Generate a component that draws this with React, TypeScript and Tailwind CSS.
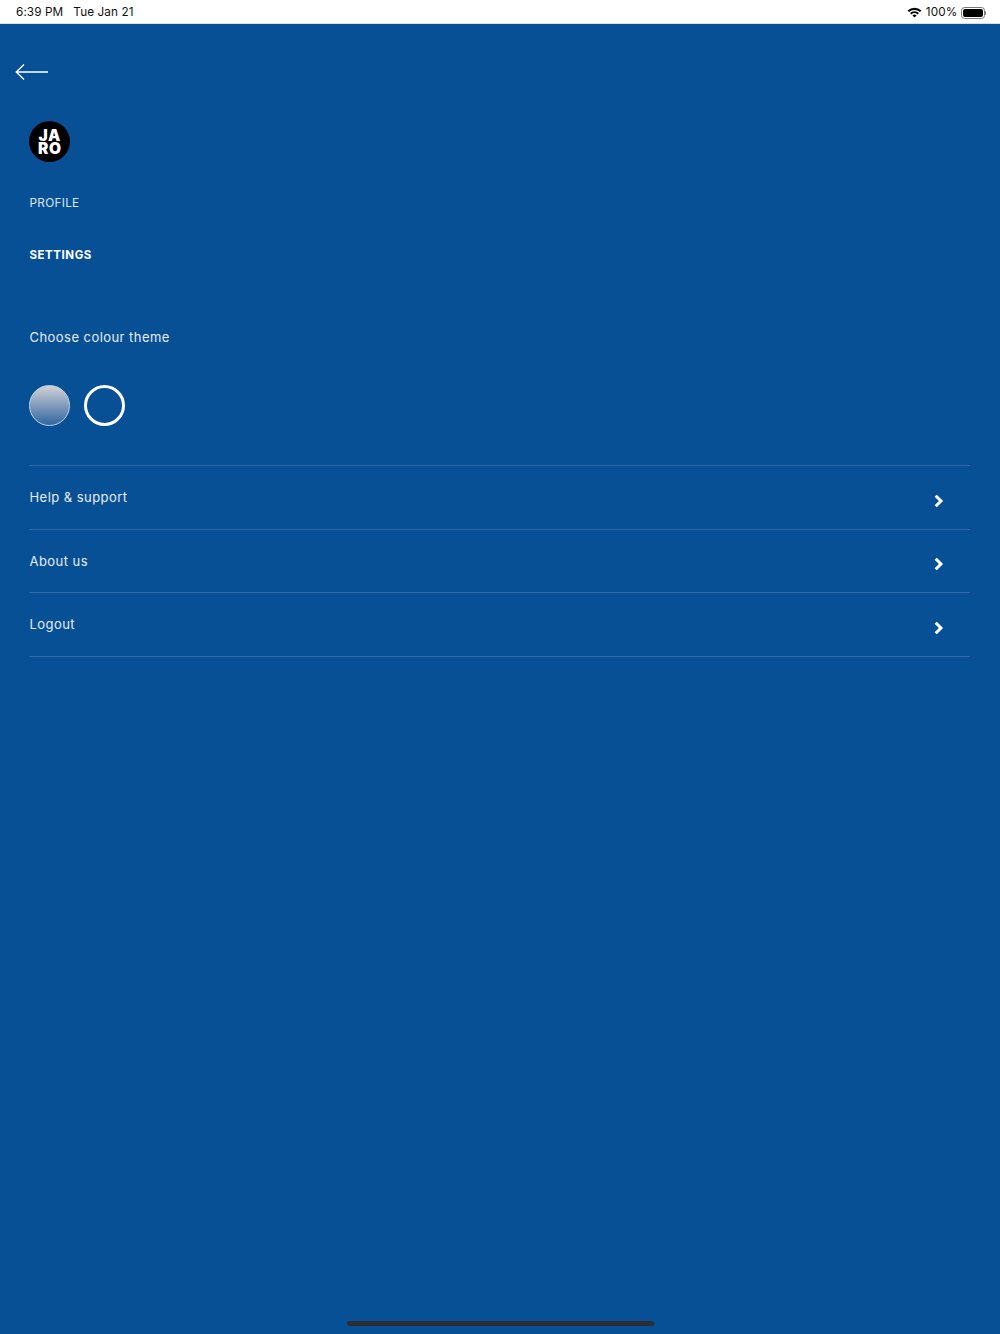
import React from "react";

const Chevron = () => (
  <svg width="10" height="14" viewBox="0 0 10 14" className="block">
    <path d="M1.7 1.7 L7 7 L1.7 12.3" fill="none" stroke="#fff" strokeWidth="3" />
  </svg>
);

const Row = ({ label }: { label: string }) => (
  <div className="h-[63.5px] flex border-b border-[#3468a6] pr-[26.5px]">
    <span className="ml-[0.25px] pt-[22px] text-[13px] leading-[19px] tracking-[0.45px] text-[#e6eef7]">{label}</span>
    <span className="ml-auto pt-[27.5px]"><Chevron /></span>
  </div>
);

export default function App() {
  return (
    <div className="w-[1000px] h-[1334px] bg-[#085096] flex flex-col overflow-hidden relative font-['Inter','Liberation_Sans',sans-serif]">
      <div className="h-[24px] shrink-0 bg-white border-b border-[#d8dde3] flex items-center pl-[16px] pr-[14px] pt-[2px] text-[#111] text-[11.75px]">
        <span className="tracking-[0.1px]">6:39 PM</span>
        <span className="ml-[10px] tracking-[0.1px]">Tue Jan 21</span>
        <span className="ml-auto flex items-center">
          <svg width="15" height="11" viewBox="0 0 15 11" className="mr-[4px]">
            <path d="M0.6 3.6 A10 10 0 0 1 14.4 3.6 L13 5.1 A8 8 0 0 0 2 5.1 Z M3 6 A6.6 6.6 0 0 1 12 6 L10.6 7.4 A4.6 4.6 0 0 0 4.4 7.4 Z M5.4 8.4 A3.2 3.2 0 0 1 9.6 8.4 L7.5 10.6 Z" fill="#000" />
          </svg>
          <span className="tracking-[0.15px]">100%</span>
          <span className="ml-[3px] w-[24px] h-[12px] rounded-[3.5px] border border-[#777] p-[1px] block">
            <span className="block w-full h-full bg-black rounded-[2px]"></span>
          </span>
          <span className="w-[1.5px] h-[4px] bg-[#888] rounded-r-sm block"></span>
        </span>
      </div>

      <div className="pl-[15px] pt-[38px]">
        <svg width="34" height="20" viewBox="0 0 34 20" className="block">
          <path d="M33 10 H1.5 M9 2.5 L1.2 10 L9 17.5" fill="none" stroke="#fff" strokeWidth="1.3" />
        </svg>
      </div>

      <div className="pl-[29.25px] pr-[30px] flex flex-col">
        <div className="mt-[39px] w-[41px] h-[41px] rounded-full bg-black flex items-center justify-center">
          <span className="text-white font-black text-[15.5px] leading-[13px] tracking-[0.6px] text-center">JA<br />RO</span>
        </div>
        <div className="ml-[0.25px] mt-[33px] text-[11.75px] leading-[16px] tracking-[0.3px] text-[#dce7f3]">PROFILE</div>
        <div className="ml-[0.25px] mt-[36px] text-[11.5px] leading-[16px] tracking-[0.55px] font-bold text-white">SETTINGS</div>
        <div className="ml-[0.25px] mt-[65px] text-[13px] leading-[19px] tracking-[0.45px] text-[#e6eef7]">Choose colour theme</div>
        <div className="mt-[38px] flex gap-[14px]">
          <div className="w-[41px] h-[41px] rounded-full border border-[#c3d2e2] bg-gradient-to-b from-[#d2d2d4] to-[#2f669f]"></div>
          <div className="w-[41px] h-[41px] rounded-full border-[3px] border-white"></div>
        </div>
        <div className="mt-[39px] border-t border-[#3468a6]">
          <Row label="Help & support" />
          <Row label="About us" />
          <Row label="Logout" />
        </div>
      </div>

      <div className="absolute left-[347px] bottom-[8px] w-[307px] h-[5px] rounded-full bg-[#2a2d33]"></div>
    </div>
  );
}
